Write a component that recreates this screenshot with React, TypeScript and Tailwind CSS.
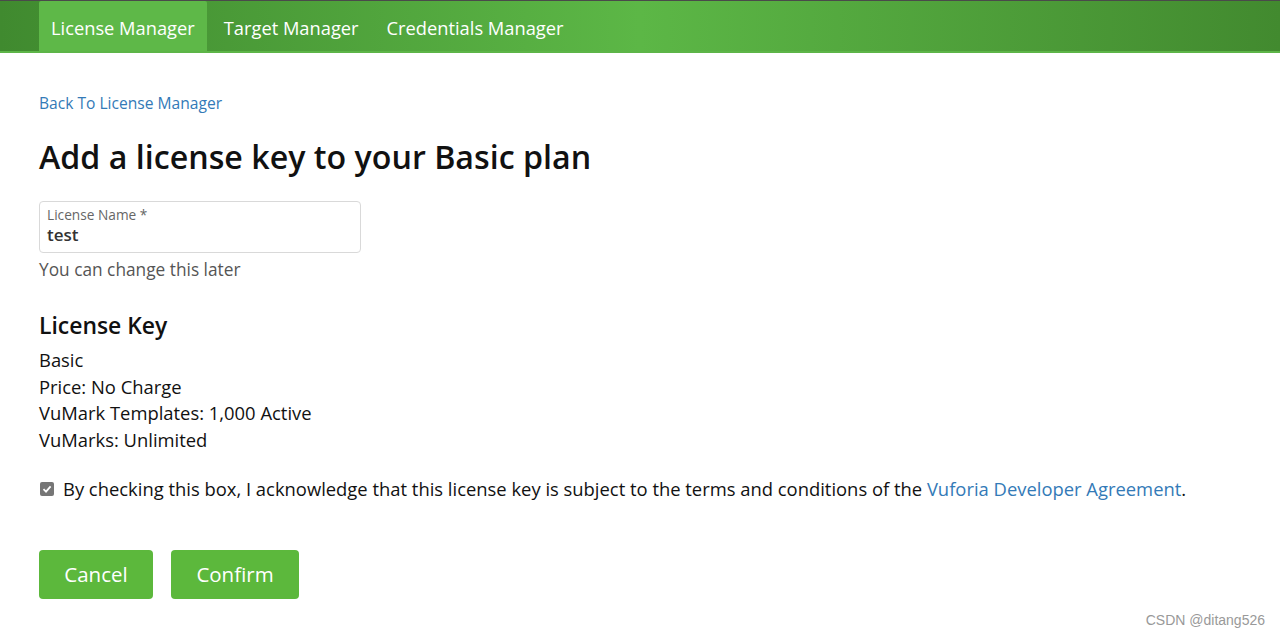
import React from "react";

export default function App() {
  return (
    <div className="min-h-[639px] w-[1280px] bg-white relative" style={{ fontFamily: '"Open Sans", "Noto Sans", sans-serif' }}>
      <nav className="h-[53px] border-t border-[#4a4a4a] border-b-2 border-b-[#5db548] bg-[linear-gradient(90deg,#408a2f_0%,#5cb746_50%,#428a2f_100%)] flex pl-[39px]">
        <a className="h-full px-[12px] pt-[3px] flex items-center bg-[#5eb848] text-white text-[18.3px] rounded-t-[2px]">License Manager</a>
        <a className="h-full pl-[17px] pr-[15px] pt-[3px] flex items-center text-white text-[18.3px]">Target Manager</a>
        <a className="h-full px-[13px] pt-[3px] flex items-center text-white text-[18.3px]">Credentials Manager</a>
      </nav>
      <main className="pl-[39px] pt-[39px]">
        <a className="text-[15.6px] text-[#337ab7] leading-[22px] block">Back To License Manager</a>
        <h1 className="mt-[23px] text-[32.2px] font-semibold text-[#111] leading-[40px]">Add a license key to your Basic plan</h1>
        <div className="mt-[24px] w-[322px] h-[52px] border border-[#d9d9d9] rounded-[4px] px-[7px] pt-[4px]">
          <div className="text-[13.7px] text-[#666] leading-[18px]">License Name *</div>
          <div className="text-[17px] text-[#333] leading-[22px] font-semibold">test</div>
        </div>
        <p className="mt-[5px] text-[17.3px] text-[#555] leading-[24px]">You can change this later</p>
        <h2 className="mt-[29px] text-[22.9px] font-semibold text-[#111] leading-[30px]">License Key</h2>
        <div className="mt-[6px] text-[18.4px] text-[#111] leading-[26.5px]">
          <div>Basic</div>
          <div>Price: No Charge</div>
          <div>VuMark Templates: 1,000 Active</div>
          <div>VuMarks: Unlimited</div>
        </div>
        <label className="mt-[23px] flex items-center gap-[10px] text-[18.4px] text-[#111] leading-[26px]">
          <span className="ml-[1px] w-[14px] h-[14px] rounded-[2px] bg-[#767676] flex items-center justify-center">
            <svg width="10" height="10" viewBox="0 0 10 10"><path d="M1.5 5.2 L4 7.6 L8.6 2.4" stroke="white" strokeWidth="1.8" fill="none" /></svg>
          </span>
          <span className="-ml-[1px]">
            By checking this box, I acknowledge that this license key is subject to the terms and conditions of the{" "}
            <a className="text-[#337ab7]">Vuforia Developer Agreement</a>.
          </span>
        </label>
        <div className="mt-[48px] flex gap-[18px]">
          <button className="w-[114px] h-[49px] rounded-[4px] bg-[#5cb83c] text-white text-[20.5px]">Cancel</button>
          <button className="w-[128px] h-[49px] rounded-[4px] bg-[#5cb83c] text-white text-[20.5px]">Confirm</button>
        </div>
      </main>
      <div className="absolute right-[15px] bottom-[8px] text-[14px] text-[#999]" style={{ fontFamily: '"Liberation Sans", Arial, sans-serif' }}>CSDN @ditang526</div>
    </div>
  );
}
